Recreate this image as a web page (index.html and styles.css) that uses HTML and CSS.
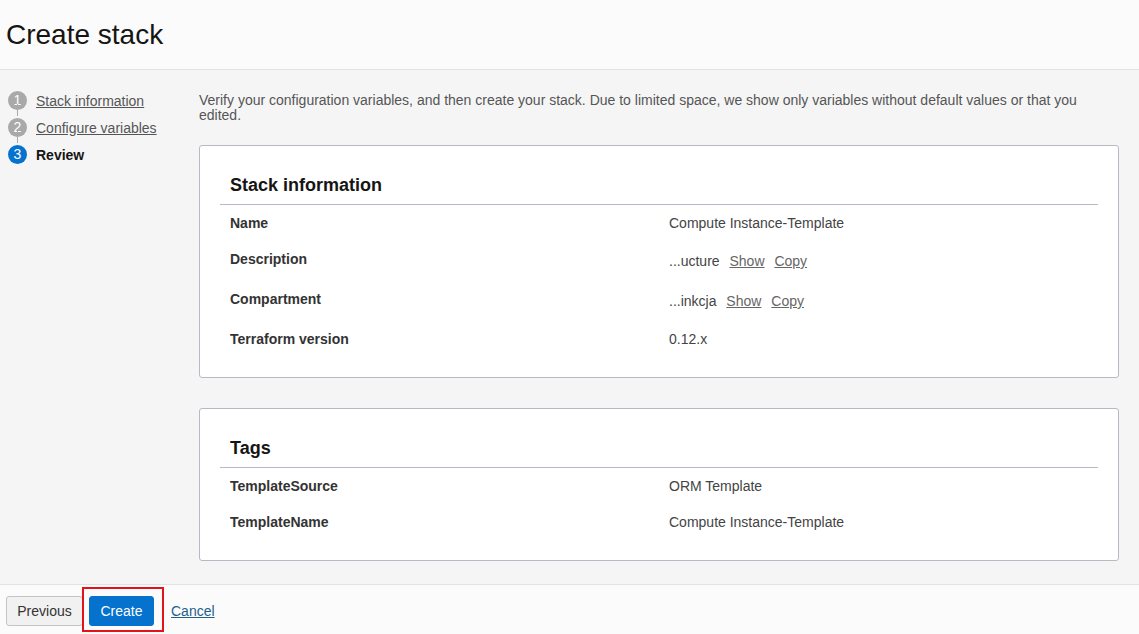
FILE: index.html
```html
<!DOCTYPE html>
<html lang="en">
<head>
<meta charset="utf-8">
<title>Create stack</title>
<link rel="stylesheet" href="styles.css">
</head>
<body>
<div class="page">
  <header class="page-header">
    <h1 class="page-title">Create stack</h1>
  </header>
  <div class="page-main">
    <nav class="steps">
      <div class="step">
        <span class="step-num">1</span>
        <a class="step-link" href="#">Stack information</a>
      </div>
      <div class="step">
        <span class="step-num">2</span>
        <a class="step-link" href="#">Configure variables</a>
      </div>
      <div class="step step-current">
        <span class="step-num">3</span>
        <span class="step-label">Review</span>
      </div>
    </nav>
    <section class="content">
      <p class="intro">Verify your configuration variables, and then create your stack. Due to limited space, we show only variables without default values or that you edited.</p>

      <div class="card">
        <h2 class="card-title">Stack information</h2>
        <div class="card-rows">
          <div class="row">
            <div class="row-label">Name</div>
            <div class="row-value">Compute Instance-Template</div>
          </div>
          <div class="row row-links">
            <div class="row-label">Description</div>
            <div class="row-value">...ucture <a href="#" class="val-link">Show</a> <a href="#" class="val-link">Copy</a></div>
          </div>
          <div class="row row-links">
            <div class="row-label">Compartment</div>
            <div class="row-value">...inkcja <a href="#" class="val-link">Show</a> <a href="#" class="val-link">Copy</a></div>
          </div>
          <div class="row">
            <div class="row-label">Terraform version</div>
            <div class="row-value">0.12.x</div>
          </div>
        </div>
      </div>

      <div class="card">
        <h2 class="card-title">Tags</h2>
        <div class="card-rows">
          <div class="row">
            <div class="row-label">TemplateSource</div>
            <div class="row-value">ORM Template</div>
          </div>
          <div class="row">
            <div class="row-label">TemplateName</div>
            <div class="row-value">Compute Instance-Template</div>
          </div>
        </div>
      </div>
    </section>
  </div>
  <footer class="page-footer">
    <button class="btn btn-secondary" type="button">Previous</button>
    <span class="highlight"><button class="btn btn-primary" type="button">Create</button></span>
    <a class="cancel-link" href="#">Cancel</a>
  </footer>
</div>
</body>
</html>
```

FILE: styles.css
```css
* { box-sizing: border-box; }

html, body {
  margin: 0;
  padding: 0;
  height: 100%;
}

body {
  font-family: "Liberation Sans", Arial, sans-serif;
  font-size: 14px;
  color: #333;
  background: #f5f5f5;
}

.page {
  display: flex;
  flex-direction: column;
  height: 100vh;
  overflow: hidden;
}

.page-header {
  height: 70px;
  flex: 0 0 70px;
  background: #fbfbfb;
  border-bottom: 1px solid #e2e2e2;
  padding: 19px 0 0 6px;
}

.page-title {
  margin: 0;
  font-size: 28px;
  line-height: 32px;
  font-weight: normal;
  color: #161513;
}

.page-main {
  flex: 1;
  display: flex;
  background: #f5f5f5;
  overflow: hidden;
}

.steps {
  width: 199px;
  flex: 0 0 199px;
  padding: 17px 0 0 8px;
  display: flex;
  flex-direction: column;
}

.step {
  display: flex;
  align-items: center;
  height: 27px;
  position: relative;
}

.step + .step::before {
  content: "";
  position: absolute;
  left: 9px;
  top: -10px;
  width: 1px;
  height: 12px;
  background: #a9a9a9;
}

.step-num {
  width: 19px;
  height: 19px;
  border-radius: 50%;
  background: #a9a9a9;
  color: #fff;
  font-size: 14px;
  line-height: 19px;
  text-align: center;
  margin-right: 9px;
  flex: 0 0 19px;
}

.step-current .step-num {
  background: #0572ce;
}

.step-link {
  color: #555;
  text-decoration: underline;
  font-size: 14px;
}

.step-label {
  font-weight: bold;
  color: #161513;
  font-size: 14px;
}

.content {
  flex: 1;
  padding: 23px 20px 24px 0;
  min-width: 0;
}

.intro {
  margin: 0 0 22px 0;
  font-size: 14px;
  line-height: 15px;
  color: #555;
}

.card {
  background: #fff;
  border: 1px solid #b6bac3;
  border-radius: 3px;
  padding: 28px 20px 20px 20px;
  margin-bottom: 30px;
}

.card-title {
  margin: 0;
  padding: 0 0 8px 10px;
  font-size: 18px;
  line-height: 22px;
  font-weight: bold;
  color: #161513;
  border-bottom: 1px solid #b6bac3;
}

.card-rows {
  display: flex;
  flex-direction: column;
}

.row {
  display: grid;
  grid-template-columns: 1fr 1fr;
  padding: 10px 0;
}

.row-label {
  padding-left: 10px;
  font-weight: bold;
  font-size: 14px;
  line-height: 16px;
  color: #333;
}

.row-value {
  padding-left: 10px;
  font-size: 14px;
  line-height: 16px;
  color: #444;
}

.row-links .row-value {
  line-height: 20px;
}

.val-link {
  color: #666;
  text-decoration: underline;
  margin-left: 6px;
}

.page-footer {
  flex: 0 0 50px;
  height: 50px;
  background: #fbfbfb;
  border-top: 1px solid #e2e2e2;
  display: flex;
  align-items: flex-start;
  padding: 11px 0 0 6px;
}

.btn {
  font-family: "Liberation Sans", Arial, sans-serif;
  font-size: 14px;
  height: 30px;
  border-radius: 3px;
  cursor: pointer;
}

.btn-secondary {
  width: 77px;
  background: #f1f1f1;
  color: #333;
  border: 1px solid #c4c4c4;
}

.highlight {
  position: relative;
  display: inline-flex;
  margin-left: 6px;
}

.highlight::after {
  content: "";
  position: absolute;
  top: -9px;
  bottom: -6px;
  left: -7px;
  right: -10px;
  border: 2px solid #e3131b;
  pointer-events: none;
}

.btn-primary {
  width: 65px;
  background: #0572ce;
  color: #fff;
  border: 1px solid #0572ce;
}

.cancel-link {
  margin-left: 17px;
  color: #1f5f8b;
  text-decoration: underline;
  font-size: 14px;
  line-height: 30px;
}
```
